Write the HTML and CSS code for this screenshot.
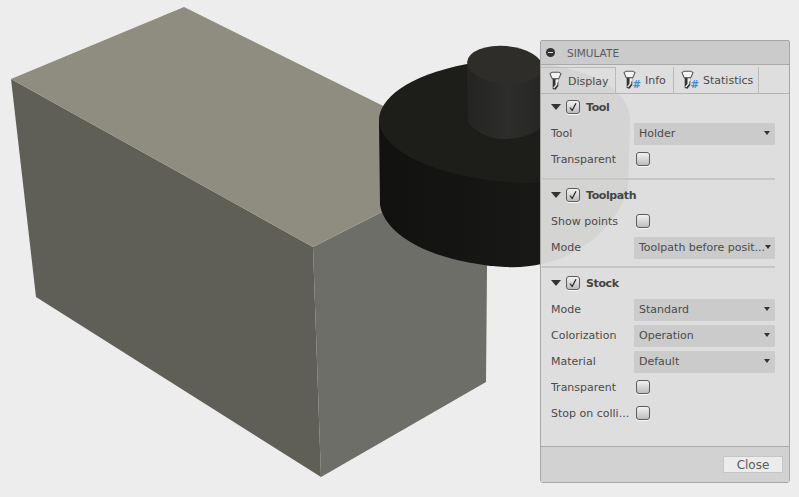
FILE: index.html
```html
<!DOCTYPE html>
<html lang="en">
<head>
<meta charset="utf-8">
<title>Simulate</title>
<link rel="stylesheet" href="styles.css">
</head>
<body>
<svg width="0" height="0" class="defs">
  <defs>
    <linearGradient id="hub" x1="0" x2="1" y1="0" y2="0">
      <stop offset="0" stop-color="#242422"/>
      <stop offset="0.55" stop-color="#2d2d2b"/>
      <stop offset="1" stop-color="#262624"/>
    </linearGradient>
    <linearGradient id="rim" x1="0" x2="1" y1="0" y2="0">
      <stop offset="0" stop-color="#111110"/>
      <stop offset="0.6" stop-color="#181816"/>
      <stop offset="1" stop-color="#161614"/>
    </linearGradient>
  </defs>
  <symbol id="tool" viewBox="0 0 14 21">
    <path d="M1 2.500 3.500 1h7L13 2.500 10.500 8h-7z" fill="#f4f4f4" stroke="#555" stroke-width="1.100" stroke-linejoin="round"/>
    <path d="M4 8h6v8l-3 4-3-1z" fill="#333"/>
    <path d="M7 8.500h3v2.500L7 15zM4.500 17.500 9 12.500v2L5.500 18.500z" fill="#eee"/>
  </symbol>
  <symbol id="check" viewBox="0 0 14 14">
    <path d="M3.500 7.500 6 11 10.500 2.500" fill="none" stroke="#111" stroke-width="1.200"/>
  </symbol>
</svg>
<main class="stage">
  <svg class="scene" width="799" height="497" viewBox="0 0 799 497">
    <polygon points="11,79 313,247 321,477 36,297" fill="#605f57"/>
    <polygon points="313,247 488,158 486,382 321,477" fill="#6d6e67"/>
    <polygon points="184,7 488,158 313,247 11,79" fill="#8f8d80"/>
    <path d="M379,122 L380,205 C385,235 430,262 505,267 C560,270 610,240 628,190 L630,124 Z" fill="url(#rim)"/>
    <path d="M379,122 C378,100 405,76 467,64 C500,59 570,58 612,88 C625,98 631,110 630,124 C628,155 590,183 530,183 C470,183 385,162 379,122 Z" fill="#1d1d1a"/>
    <path d="M467,65 L468,123 C478,133 490,139 503,139 C520,139 535,134 543,126 L543,67 Z" fill="url(#hub)"/>
    <ellipse cx="505" cy="65" rx="38" ry="19" transform="rotate(5 505 65)" fill="#2e2d2a"/>
  </svg>

  <section class="panel">
    <header class="panel-title">
      <span class="collapse"></span>
      <span>SIMULATE</span>
    </header>
    <nav class="tabs">
      <div class="tab tab-active">
        <svg class="tab-icon"><use href="#tool"/></svg>
        <span>Display</span>
      </div>
      <div class="tab tab-info">
        <span class="icon-wrap"><svg class="tab-icon"><use href="#tool"/></svg><b class="hash">#</b></span>
        <span>Info</span>
      </div>
      <div class="tab tab-stats">
        <span class="icon-wrap"><svg class="tab-icon"><use href="#tool"/></svg><b class="hash">#</b></span>
        <span>Statistics</span>
      </div>
    </nav>
    <div class="panel-body">
      <div class="group-head">
        <span class="triangle"></span>
        <span class="checkbox"><svg class="tick"><use href="#check"/></svg></span>
        <span class="group-name">Tool</span>
      </div>
      <div class="row"><span>Tool</span><div class="select"><span>Holder</span><i class="caret"></i></div></div>
      <div class="row"><span>Transparent</span><span class="checkbox box-field"></span></div>
      <hr class="sep">

      <div class="group-head">
        <span class="triangle"></span>
        <span class="checkbox"><svg class="tick"><use href="#check"/></svg></span>
        <span class="group-name">Toolpath</span>
      </div>
      <div class="row"><span>Show points</span><span class="checkbox box-field"></span></div>
      <div class="row"><span>Mode</span><div class="select"><span>Toolpath before posit...</span><i class="caret"></i></div></div>
      <hr class="sep">

      <div class="group-head">
        <span class="triangle"></span>
        <span class="checkbox"><svg class="tick"><use href="#check"/></svg></span>
        <span class="group-name">Stock</span>
      </div>
      <div class="row"><span>Mode</span><div class="select"><span>Standard</span><i class="caret"></i></div></div>
      <div class="row"><span>Colorization</span><div class="select"><span>Operation</span><i class="caret"></i></div></div>
      <div class="row"><span>Material</span><div class="select"><span>Default</span><i class="caret"></i></div></div>
      <div class="row"><span>Transparent</span><span class="checkbox box-field"></span></div>
      <div class="row"><span>Stop on colli...</span><span class="checkbox box-field"></span></div>
    </div>
    <footer class="panel-foot">
      <button class="close" type="button">Close</button>
    </footer>
  </section>
</main>
</body>
</html>
```

FILE: styles.css
```css
* { box-sizing: border-box; }
html, body { margin: 0; padding: 0; }
body {
  width: 799px;
  height: 497px;
  overflow: hidden;
  background: #ededed;
  font-family: "DejaVu Sans", sans-serif;
  font-size: 11px;
  color: #4a4a4a;
}
.defs { position: absolute; }
.stage { position: relative; width: 799px; height: 497px; }
.scene { display: block; }

.panel {
  position: absolute;
  left: 540px;
  top: 40px;
  width: 250px;
  height: 443px;
  display: flex;
  flex-direction: column;
  background: rgba(221, 221, 221, 0.958);
  border: 1px solid #a6a6a6;
  border-radius: 2px 2px 3px 3px;
}
.panel-title {
  flex: 0 0 24px;
  display: flex;
  align-items: center;
  gap: 12px;
  padding-left: 5px;
  background: rgba(200, 200, 200, 0.85);
  border-bottom: 1px solid #a9a9a9;
  font-size: 10.500px;
  color: #5a5a5a;
}
.collapse {
  position: relative;
  width: 9px;
  height: 9px;
  border-radius: 50%;
  background: #333;
}
.collapse::after {
  content: "";
  position: absolute;
  left: 2px;
  top: 4px;
  width: 5px;
  height: 1px;
  background: #ddd;
}
.tabs {
  flex: 0 0 28px;
  display: flex;
  padding-top: 2px;
  border-bottom: 1px solid #b4b4b4;
}
.tab {
  display: flex;
  align-items: center;
  height: 26px;
  border-right: 1px solid #b9b9b9;
  gap: 6px;
}
.tab-active {
  width: 75px;
  padding-left: 8px;
  height: 27px;
  border-top: 1px solid #bdbdbd;
  margin-bottom: -1px;
  position: relative;
}
.tab-info { width: 58px; padding-left: 7px; gap: 5px; }
.tab-stats { width: 85px; padding-left: 7px; gap: 5px; }
.tab-icon { display: block; width: 13px; height: 20px; }
.icon-wrap { position: relative; display: block; width: 17px; }
.hash {
  position: absolute;
  right: -1px;
  bottom: 0;
  font-size: 10px;
  line-height: 10px;
  color: #3f8fd8;
  font-weight: 700;
}
.panel-body { flex: 1 1 auto; }
.group-head {
  display: flex;
  align-items: center;
  height: 26px;
  padding-left: 10px;
}
.triangle {
  width: 0;
  height: 0;
  border-left: 5px solid transparent;
  border-right: 5px solid transparent;
  border-top: 6px solid #333;
  margin-right: 5px;
}
.group-name { margin-left: 6px; font-weight: 700; letter-spacing: -0.4px; color: #444; }
.checkbox {
  display: block;
  width: 14px;
  height: 14px;
  border: 1px solid #5c5c5c;
  border-radius: 3px;
  background: linear-gradient(#f2f2f2, #bdbdbd);
  box-shadow: 0 1px 0 #fafafa;
}
.tick { display: block; width: 12px; height: 12px; }
.row {
  display: grid;
  grid-template-columns: 83px 141px;
  align-items: center;
  height: 26px;
  padding-left: 10px;
}
.box-field { margin-left: 2px; }
.select {
  height: 22px;
  margin-top: 2px;
  display: flex;
  align-items: center;
  justify-content: space-between;
  padding: 0 5px 2px;
  background: #cbcbcb;
  border-radius: 1px;
  white-space: nowrap;
}
.caret {
  flex: none;
  width: 0;
  height: 0;
  border-left: 3px solid transparent;
  border-right: 3px solid transparent;
  border-top: 4px solid #333;
}
.sep {
  height: 2px;
  margin: 6px 14px 2px 1px;
  border: 0;
  background: #c6c6c6;
}
.panel-foot {
  flex: 0 0 36px;
  display: flex;
  justify-content: flex-end;
  align-items: flex-start;
  padding: 9px 6px 0 0;
  background: #d2d2d2;
  border-top: 1px solid #a9a9a9;
}
.close {
  width: 60px;
  height: 17px;
  padding: 0;
  background: #ececec;
  border: 1px solid #c6c6c6;
  font: 12px "DejaVu Sans", sans-serif;
  color: #5a5a5a;
}
```
